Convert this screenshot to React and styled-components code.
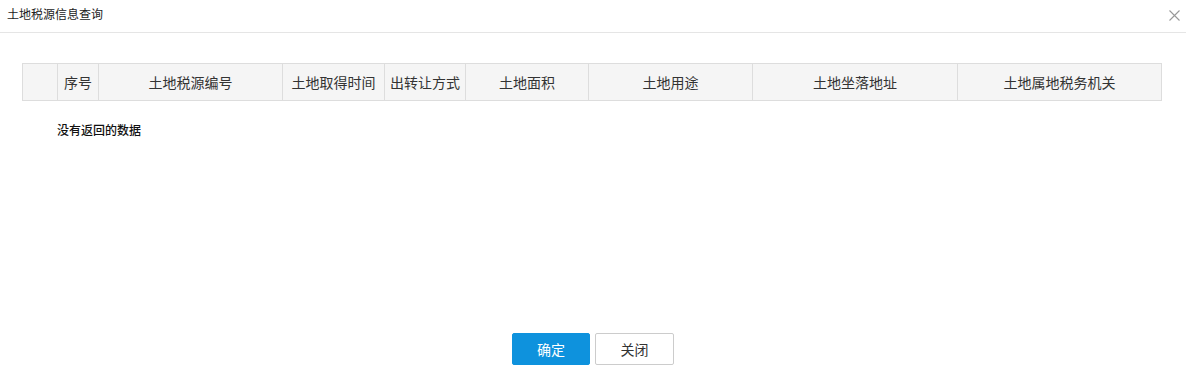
import React from 'react';
import styled, {createGlobalStyle} from 'styled-components';

const GlobalStyle = createGlobalStyle`
    html, body {
        margin: 0;
        padding: 0;
        background: #fff;
        font-family: "Noto Sans CJK SC", "Noto Sans", sans-serif;
        color: #333;
    }
`;

const Dialog = styled.div`
    display: flex;
    flex-direction: column;
    width: 1186px;
    height: 380px;
    box-sizing: border-box;
`;

const Header = styled.div`
    display: flex;
    align-items: center;
    justify-content: space-between;
    height: 33px;
    box-sizing: border-box;
    padding: 0 6px 4px 7px;
    border-bottom: 1px solid #e5e5e5;
`;

const Title = styled.div`
    font-size: 12px;
    line-height: 16px;
    color: #222;
`;

const CloseButton = styled.div`
    width: 11px;
    height: 11px;
    cursor: pointer;
    margin-top: 2px;
    display: flex;
`;

const Body = styled.div`
    flex: 1;
    padding: 30px 26px 0 22px;
`;

const Table = styled.table`
    width: 1139px;
    border-collapse: collapse;
    table-layout: fixed;
`;

const Th = styled.th`
    height: 36px;
    padding: 0;
    background: #f5f5f5;
    border: 1px solid #ddd;
    font-size: 14px;
    font-weight: normal;
    color: #333;
    text-align: center;
    white-space: nowrap;
`;

const Empty = styled.div`
    margin: 21px 0 0 35px;
    font-size: 12px;
    line-height: 16px;
    color: #111;
    font-weight: 500;
`;

const Footer = styled.div`
    display: flex;
    justify-content: center;
    gap: 5px;
    padding: 0 0 15px 0;
`;

const Button = styled.button`
    width: ${props => props.primary ? 78 : 79}px;
    height: 32px;
    box-sizing: border-box;
    border-radius: 2px;
    border: 1px solid ${props => props.primary ? '#0e92dd' : '#ccc'};
    background: ${props => props.primary ? '#0e92dd' : '#fff'};
    color: ${props => props.primary ? '#fff' : '#333'};
    font-family: inherit;
    font-size: 14px;
    cursor: pointer;
    padding: 0;
`;

const columns = [
    {label: '', w: 35},
    {label: '序号', w: 41},
    {label: '土地税源编号', w: 184},
    {label: '土地取得时间', w: 102},
    {label: '出转让方式', w: 81},
    {label: '土地面积', w: 123},
    {label: '土地用途', w: 164},
    {label: '土地坐落地址', w: 205},
    {label: '土地属地税务机关', w: 204},
];

export default function App() {
    return (
        <Dialog>
            <GlobalStyle/>
            <Header>
                <Title>土地税源信息查询</Title>
                <CloseButton>
                    <svg width="11" height="11" viewBox="0 0 11 11">
                        <path d="M0.5 0.5 L10.5 10.5 M10.5 0.5 L0.5 10.5" stroke="#999" strokeWidth="1.1"/>
                    </svg>
                </CloseButton>
            </Header>
            <Body>
                <Table>
                    <colgroup>
                        {columns.map((c, i) => <col key={i} style={{width: c.w}}/>)}
                    </colgroup>
                    <thead>
                        <tr>
                            {columns.map((c, i) => <Th key={i}>{c.label}</Th>)}
                        </tr>
                    </thead>
                </Table>
                <Empty>没有返回的数据</Empty>
            </Body>
            <Footer>
                <Button primary>确定</Button>
                <Button>关闭</Button>
            </Footer>
        </Dialog>
    );
}
